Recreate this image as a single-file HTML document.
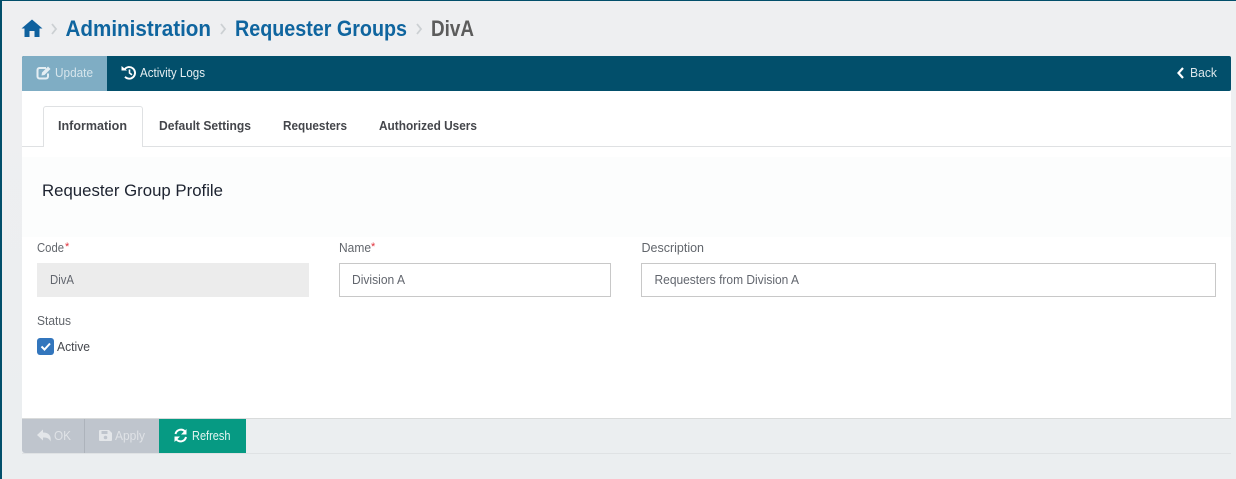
<!DOCTYPE html>
<html>
<head>
<meta charset="utf-8">
<style>
html,body{margin:0;padding:0;width:1236px;height:479px;overflow:hidden;background:#ebeef0}
svg{display:block}
text{font-family:"Liberation Sans",sans-serif}
</style>
</head>
<body>
<svg width="1236" height="479" viewBox="0 0 1236 479" xmlns="http://www.w3.org/2000/svg">
<defs>
<linearGradient id="bg" x1="0" y1="0" x2="0" y2="1">
<stop offset="0" stop-color="#eeeff1"/>
<stop offset="0.2" stop-color="#eeeff1"/>
<stop offset="0.85" stop-color="#ebeef0"/>
<stop offset="1" stop-color="#ebeef0"/>
</linearGradient>
</defs>
<rect width="1236" height="479" fill="url(#bg)"/>
<rect width="1236" height="1" fill="#024f6b"/>
<rect width="2" height="479" fill="#024f6b"/>

<!-- breadcrumb -->
<path d="M32 19.500 L21.500 28.500 L24.500 28.500 L24.500 37 L29.500 37 L29.500 31 L34.500 31 L34.500 37 L39.500 37 L39.500 28.500 L42.500 28.500 Z" fill="#0f619e"/>
<path d="M52 24 L56 29 L52 34" fill="none" stroke="#ccd0d3" stroke-width="1.800"/>
<text x="65.500" y="36" font-size="22" font-weight="700" fill="#0f659f" textLength="145.500" lengthAdjust="spacingAndGlyphs">Administration</text>
<path d="M221 24 L225 29 L221 34" fill="none" stroke="#ccd0d3" stroke-width="1.800"/>
<text x="235" y="36" font-size="22" font-weight="700" fill="#0f659f" textLength="172" lengthAdjust="spacingAndGlyphs">Requester Groups</text>
<path d="M417 24 L421 29 L417 34" fill="none" stroke="#ccd0d3" stroke-width="1.800"/>
<text x="431" y="36" font-size="22" font-weight="700" fill="#5c5c5c" textLength="43" lengthAdjust="spacingAndGlyphs">DivA</text>

<!-- toolbar -->
<rect x="22" y="56" width="1209" height="35" rx="2" fill="#024f6b"/>
<path d="M22 91 V58 a2 2 0 0 1 2-2 H107 V91 Z" fill="#7fadc4"/>
<path d="M46 68 H39.500 a2 2 0 0 0-2 2 V76.500 a2 2 0 0 0 2 2 H46 a2 2 0 0 0 2-2 V73.500" fill="none" stroke="#e4eef3" stroke-width="2"/>
<path d="M41.500 75.500 L42 72.500 L48 66.500 L50.500 69 L44.500 75 Z" fill="#e4eef3"/>
<text x="55" y="77" font-size="13" fill="#d6e5ec" textLength="38" lengthAdjust="spacingAndGlyphs">Update</text>
<path d="M124.500 69.500 A5.800 5.800 0 1 1 125 76.800" fill="none" stroke="#fff" stroke-width="1.900"/>
<path d="M121.500 66 L121.500 70.500 L127 70.500 Z" fill="#fff"/>
<path d="M129.500 69.500 V73 L132 74.800" fill="none" stroke="#fff" stroke-width="1.600"/>
<text x="140" y="77" font-size="13" fill="#e8f0f3" textLength="65" lengthAdjust="spacingAndGlyphs">Activity Logs</text>
<path d="M1183 68 L1178.500 73 L1183 78" fill="none" stroke="#fff" stroke-width="2.200"/>
<text x="1190" y="77" font-size="13" fill="#dbe6eb" textLength="27" lengthAdjust="spacingAndGlyphs">Back</text>

<!-- panel -->
<rect x="22" y="91" width="1209" height="327" fill="#fff"/>
<rect x="22" y="157" width="1209" height="80" fill="#fcfdfd"/>
<rect x="22" y="146" width="1209" height="1" fill="#dfe1e3"/>

<!-- tabs -->
<path d="M43.500 147 V109 a2.500 2.500 0 0 1 2.500-2.500 H140 a2.500 2.500 0 0 1 2.500 2.500 V147" fill="#fff" stroke="#dfe1e3"/>
<rect x="44" y="146" width="98" height="1.500" fill="#fff"/>
<text x="58" y="130" font-size="12.500" font-weight="700" fill="#44464b" textLength="69" lengthAdjust="spacingAndGlyphs">Information</text>
<text x="159" y="130" font-size="12.500" font-weight="700" fill="#44464b" textLength="92" lengthAdjust="spacingAndGlyphs">Default Settings</text>
<text x="283" y="130" font-size="12.500" font-weight="700" fill="#44464b" textLength="64" lengthAdjust="spacingAndGlyphs">Requesters</text>
<text x="379" y="130" font-size="12.500" font-weight="700" fill="#44464b" textLength="98" lengthAdjust="spacingAndGlyphs">Authorized Users</text>

<text x="42" y="196" font-size="17" fill="#1d2330" textLength="181" lengthAdjust="spacingAndGlyphs">Requester Group Profile</text>

<!-- form -->
<text x="37" y="252" font-size="13" fill="#62666c" textLength="27" lengthAdjust="spacingAndGlyphs">Code</text>
<text x="65" y="250" font-size="11" fill="#e0303a">*</text>
<rect x="37" y="263" width="272" height="34" fill="#ececec"/>
<text x="50" y="284" font-size="13" fill="#62666e" textLength="24" lengthAdjust="spacingAndGlyphs">DivA</text>

<text x="339" y="252" font-size="13" fill="#62666c" textLength="32" lengthAdjust="spacingAndGlyphs">Name</text>
<text x="371" y="250" font-size="11" fill="#e0303a">*</text>
<rect x="339.500" y="263.500" width="271" height="33" fill="#fff" stroke="#c8c8c8"/>
<text x="352" y="284" font-size="13" fill="#62666e" textLength="53" lengthAdjust="spacingAndGlyphs">Division A</text>

<text x="641.500" y="252" font-size="13" fill="#62666c" textLength="62.500" lengthAdjust="spacingAndGlyphs">Description</text>
<rect x="641.500" y="263.500" width="574" height="33" fill="#fff" stroke="#c8c8c8"/>
<text x="654.500" y="284" font-size="13" fill="#62666e" textLength="144.500" lengthAdjust="spacingAndGlyphs">Requesters from Division A</text>

<text x="37" y="325" font-size="13" fill="#62666c" textLength="34" lengthAdjust="spacingAndGlyphs">Status</text>
<rect x="37" y="338" width="17" height="17" rx="3" fill="#3376bd"/>
<path d="M41.500 346.500 L44.500 349.500 L50 343.500" fill="none" stroke="#fff" stroke-width="2"/>
<text x="57" y="351" font-size="13" fill="#45484e" textLength="33" lengthAdjust="spacingAndGlyphs">Active</text>

<!-- footer -->
<rect x="22" y="418" width="1209" height="1" fill="#d9dbdb"/>
<rect x="22" y="453" width="1209" height="1" fill="#dfe2e4"/>
<path d="M22 419 H159 V453 H25 a3 3 0 0 1-3-3 Z" fill="#bfc5cd"/>
<rect x="84" y="419" width="1" height="34" fill="#adb3bb"/>
<rect x="159" y="419" width="87" height="34" fill="#069a83"/>
<path d="M37 435 L43 429.500 V432.500 C49 432.500 51.500 436 50.500 441.500 C49 438 47 437.500 43 437.500 V440.500 Z" fill="#e3e6e9"/>
<text x="54" y="440" font-size="13" fill="#dfe2e6" textLength="17" lengthAdjust="spacingAndGlyphs">OK</text>
<path d="M100 430 H109 L112 433 V440 a1 1 0 0 1-1 1 H100 a1 1 0 0 1-1-1 V431 a1 1 0 0 1 1-1 Z" fill="#e3e6e9"/>
<rect x="101.500" y="431" width="6" height="3" fill="#bfc5cd"/>
<circle cx="105.500" cy="437.500" r="1.800" fill="#bfc5cd"/>
<text x="115" y="440" font-size="13" fill="#dfe2e6" textLength="30" lengthAdjust="spacingAndGlyphs">Apply</text>
<path d="M175.500 434 A5.500 5.500 0 0 1 185 431.500" fill="none" stroke="#fff" stroke-width="2"/>
<path d="M186.500 429 V434.500 H181 Z" fill="#fff"/>
<path d="M186 437 A5.500 5.500 0 0 1 176.500 439.500" fill="none" stroke="#fff" stroke-width="2"/>
<path d="M174.500 442 V436.500 H180 Z" fill="#fff"/>
<text x="192" y="440" font-size="13" fill="#e4f5f1" textLength="38.500" lengthAdjust="spacingAndGlyphs">Refresh</text>
</svg>
</body>
</html>
